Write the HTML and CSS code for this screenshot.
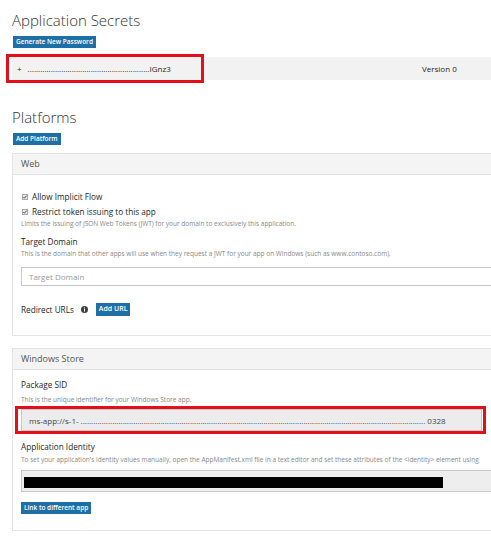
FILE: index.html
```html
<!DOCTYPE html>
<html>
<head>
  <meta charset="UTF-8">
  <title>App Registration</title>
  <link rel="stylesheet" href="styles.css">
</head>
<body>
  <div class="page">
    <h1>Application Secrets</h1>
    <button class="btn">Generate New Password</button>

    <div class="secret-row">
      <span class="secret-key"><span class="plus">+</span>..........................................................IGnz3</span>
      <span class="secret-version">Version 0</span>
      <span class="marker secret-marker"></span>
    </div>

    <h1 class="platforms-title">Platforms</h1>
    <button class="btn">Add Platform</button>

    <section class="panel">
      <div class="panel-head">Web</div>
      <div class="panel-body web-body">
        <label class="check-row">
          <svg class="check" width="6" height="6" viewBox="0 0 6 6"><rect x="0.5" y="0.5" width="5" height="5" fill="#ececec" stroke="#a8a8a8"/><path d="M1.4 3 L2.5 4.2 L4.6 1.6" fill="none" stroke="#444" stroke-width="1"/></svg>
          Allow Implicit Flow
        </label>
        <label class="check-row second">
          <svg class="check" width="6" height="6" viewBox="0 0 6 6"><rect x="0.5" y="0.5" width="5" height="5" fill="#ececec" stroke="#a8a8a8"/><path d="M1.4 3 L2.5 4.2 L4.6 1.6" fill="none" stroke="#444" stroke-width="1"/></svg>
          Restrict token issuing to this app
        </label>
        <p class="hint">Limits the issuing of JSON Web Tokens (JWT) for your domain to exclusively this application.</p>

        <div class="field-label">Target Domain</div>
        <p class="hint">This is the domain that other apps will use when they request a JWT for your app on Windows (such as www.contoso.com).</p>
        <input class="text-input" type="text" placeholder="Target Domain">

        <div class="redirect-row">
          Redirect URLs
          <svg class="info" width="7" height="7" viewBox="0 0 7 7"><circle cx="3.5" cy="3.5" r="3.5" fill="#3f3f3f"/><circle cx="3.5" cy="1.9" r="0.6" fill="#fff"/><rect x="3" y="3" width="1" height="2.6" fill="#fff"/></svg>
          <button class="btn btn-inline">Add URL</button>
        </div>
      </div>
    </section>

    <section class="panel">
      <div class="panel-head">Windows Store</div>
      <div class="panel-body store-body">
        <div class="field-label">Package SID</div>
        <p class="hint sid-hint">This is the unique identifier for your Windows Store app.</p>
        <div class="sid-wrap">
          <input class="text-input sid-input" type="text" readonly value="ms-app://s-1- .................................................................................................................................................................... 0328">
          <span class="marker sid-marker"></span>
        </div>

        <div class="field-label identity-label">Application Identity</div>
        <p class="hint identity-hint">To set your application's identity values manually, open the AppManifest.xml file in a text editor and set these attributes of the &lt;identity&gt; element using</p>
        <div class="identity-box"><div class="redacted"></div></div>

        <button class="btn btn-link">Link to different app</button>
      </div>
    </section>
  </div>
</body>
</html>
```

FILE: styles.css
```css
html, body {
  margin: 0;
  overflow: hidden;
  background-color: #fff;
}

body {
  font-family: "Open Sans", Arial, sans-serif;
  color: #262626;
}

.page {
  width: 540px;
  padding-left: 12px;
}

h1 {
  font-size: 15px;
  font-weight: 300;
  line-height: 20px;
  margin: 10px 0 0 0;
  color: #333;
}

.platforms-title {
  margin-top: 27px;
}

.btn {
  display: block;
  height: 12px;
  margin: 6px 0 0 1px;
  padding: 0 3px;
  border: none;
  border-radius: 0;
  background-color: #1f6fa7;
  color: #fff;
  font-family: inherit;
  font-size: 6.5px;
  font-weight: 600;
  line-height: 12px;
  cursor: pointer;
}

.btn:hover {
  background-color: #185a88;
}

/* secrets */
.secret-row {
  position: relative;
  display: flex;
  align-items: center;
  width: 520px;
  height: 23px;
  margin-top: 9px;
  padding-left: 5px;
  background-color: #f2f2f2;
  font-size: 8px;
  box-sizing: border-box;
}

.secret-key {
  width: 405px;
  white-space: nowrap;
}

.plus {
  margin-right: 6px;
}

.marker {
  position: absolute;
  border: 3px solid #e3101c;
  box-sizing: border-box;
}

.secret-marker {
  left: -6px;
  top: -3px;
  width: 198px;
  height: 29px;
}

/* platform panels */
.panel {
  width: 520px;
  margin-top: 8px;
  border: 1px solid #e4e4e4;
}

.panel + .panel {
  margin-top: 12px;
}

.panel-head {
  height: 20px;
  line-height: 20px;
  padding-left: 8px;
  background-color: #f4f4f4;
  border-bottom: 1px solid #e4e4e4;
  font-size: 9px;
  color: #555;
}

.panel-body {
  padding: 16px 8px 20px 8px;
  font-size: 8.2px;
}

.store-body {
  padding: 9px 8px 16px 8px;
}

.check-row {
  display: flex;
  align-items: center;
  height: 12px;
  line-height: 12px;
}

.check-row.second {
  margin-top: 3px;
}

.check {
  margin: 0 4px 0 1px;
}

.hint {
  margin: 1px 0 0 0;
  font-size: 6.5px;
  line-height: 10px;
  color: #888;
  white-space: nowrap;
}

.field-label {
  margin-top: 7px;
  line-height: 12px;
}

.store-body .field-label {
  margin-top: 0;
}

.text-input {
  display: block;
  width: 100%;
  height: 19px;
  margin-top: 8px;
  padding: 0 7px;
  border: 1px solid #c8c8c8;
  box-sizing: border-box;
  font-family: inherit;
  font-size: 8px;
  color: #444;
  outline: none;
}

.text-input::placeholder {
  color: #999;
}

.redirect-row {
  display: flex;
  align-items: center;
  height: 12px;
  margin-top: 17px;
}

.info {
  margin: 0 8px 0 7px;
}

.btn-inline {
  margin: 0;
  height: 13px;
  font-size: 7px;
}

.sid-hint {
  margin-top: 4px;
}

.sid-wrap {
  position: relative;
  width: 461px;
  margin-top: 4px;
}

.sid-input {
  height: 22px;
  margin-top: 0;
  background-color: #ececec;
}

.sid-marker {
  left: -6px;
  top: -3px;
  width: 471px;
  height: 28px;
}

.store-body .identity-label {
  margin-top: 10px;
}

.identity-hint {
  margin-top: 2px;
}

.identity-box {
  height: 22px;
  margin-top: 5px;
  padding: 6px 2px 0 2px;
  border: 1px solid #c8c8c8;
  background-color: #eee;
  box-sizing: border-box;
}

.redacted {
  width: 419px;
  height: 11px;
  background-color: #000;
}

.btn-link {
  margin: 10px 0 0 0;
  height: 12px;
}
```
